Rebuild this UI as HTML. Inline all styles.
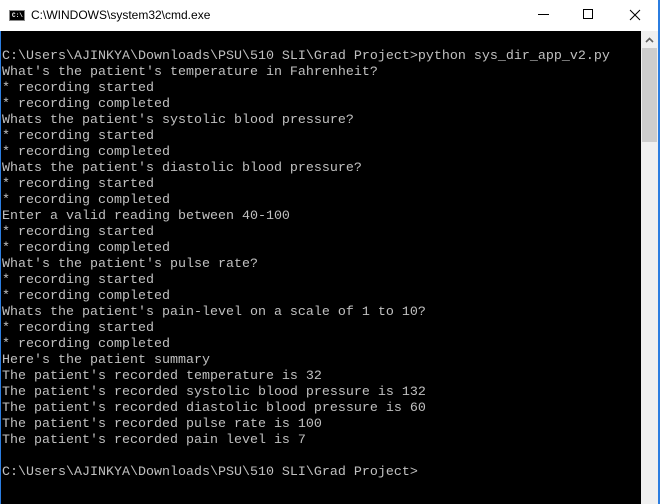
<!DOCTYPE html>
<html><head><style>
html,body{margin:0;padding:0;}
body{width:660px;height:504px;overflow:hidden;position:relative;background:#000;font-family:"Liberation Sans",sans-serif;}
#tb{position:absolute;left:0;top:0;width:660px;height:31px;background:#fff;}
#tb .t{position:absolute;left:31px;top:8px;font-size:12px;color:#000;}
#ico{position:absolute;left:9px;top:10px;width:16px;height:11px;background:#000;border:1px solid #888;box-sizing:border-box;}
#ico span{position:absolute;left:2px;top:1px;font:bold 6px "Liberation Mono",monospace;color:#fff;}
.wb{position:absolute;top:0;height:31px;}
#con{position:absolute;left:1px;top:31px;width:640px;height:473px;background:#000;}
pre{margin:0;position:absolute;left:2px;top:49px;font-family:"Liberation Mono",monospace;font-size:13.33px;line-height:16px;color:#c0c0c0;}
#sb{position:absolute;left:641px;top:31px;width:17px;height:473px;background:#f0f0f0;}
#th{position:absolute;left:1px;top:17px;width:15px;height:94px;background:#cdcdcd;}
#bl{position:absolute;left:0;top:31px;width:1px;height:473px;background:#2b7de0;}
#br{position:absolute;left:658px;top:0;width:2px;height:504px;background:#2b7de0;}
</style></head><body>
<div id="tb">
<div id="ico"><span>C:\</span></div>
<div class="t">C:\WINDOWS\system32\cmd.exe</div>
<div class="wb" style="left:538px;top:14px;width:11px;height:1px;background:#000;"></div>
<div class="wb" style="left:583px;top:9px;width:8px;height:8px;border:1px solid #000;"></div>
<svg class="wb" style="left:629px;top:9px" width="12" height="12"><path d="M1 1L11 11M11 1L1 11" stroke="#000" stroke-width="1"/></svg>
</div>
<div id="con"></div>
<pre>C:\Users\AJINKYA\Downloads\PSU\510 SLI\Grad Project&gt;python sys_dir_app_v2.py
What's the patient's temperature in Fahrenheit?
* recording started
* recording completed
Whats the patient's systolic blood pressure?
* recording started
* recording completed
Whats the patient's diastolic blood pressure?
* recording started
* recording completed
Enter a valid reading between 40-100
* recording started
* recording completed
What's the patient's pulse rate?
* recording started
* recording completed
Whats the patient's pain-level on a scale of 1 to 10?
* recording started
* recording completed
Here's the patient summary
The patient's recorded temperature is 32
The patient's recorded systolic blood pressure is 132
The patient's recorded diastolic blood pressure is 60
The patient's recorded pulse rate is 100
The patient's recorded pain level is 7

C:\Users\AJINKYA\Downloads\PSU\510 SLI\Grad Project&gt;</pre>
<div id="sb"><svg style="position:absolute;left:4px;top:6px" width="9" height="6"><path d="M1 5L4.5 1.5L8 5" stroke="#606060" stroke-width="1.6" fill="none"/></svg><div id="th"></div></div>
<div id="bl"></div>
<div id="br"></div>
</body></html>
